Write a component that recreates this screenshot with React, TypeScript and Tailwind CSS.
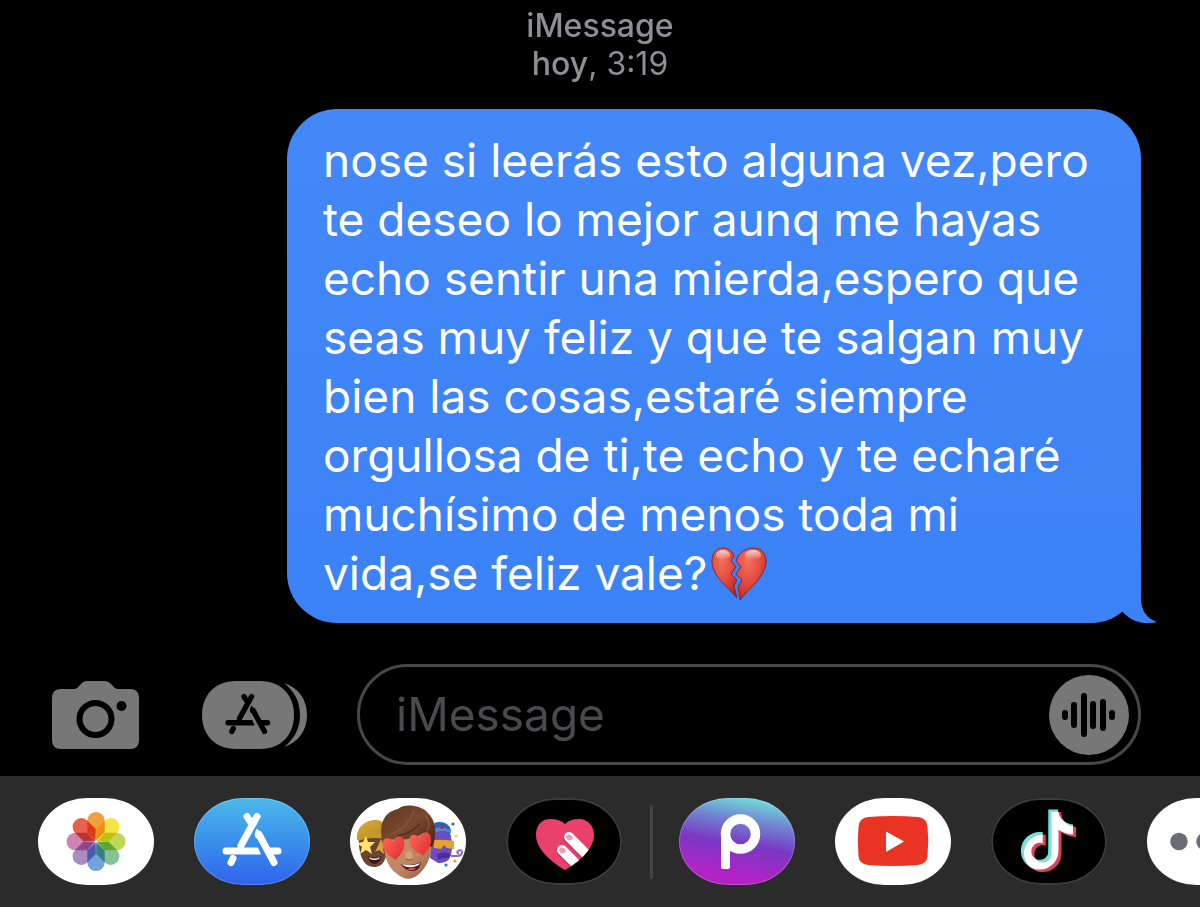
import React from "react";

const lines = [
  "nose si leerás esto alguna vez,pero",
  "te deseo lo mejor aunq me hayas",
  "echo sentir una mierda,espero que",
  "seas muy feliz y que te salgan muy",
  "bien las cosas,estaré siempre",
  "orgullosa de ti,te echo y te echaré",
  "muchísimo de menos toda mi",
];

const petals = ["#f2a03c", "#f7e442", "#c0d856", "#82c394", "#71a3dd", "#ab8bc4", "#cf84b4", "#e8604f"];

const waveBars = [
  { x: 16, top: 35, bottom: 45 },
  { x: 25, top: 27, bottom: 53 },
  { x: 35, top: 18, bottom: 62 },
  { x: 44, top: 26, bottom: 54 },
  { x: 54, top: 24, bottom: 56 },
  { x: 63, top: 35, bottom: 45 },
];

const loveHeart = "M0 12C-5 8-11 3-11-4C-11-12-3-13 0-6C3-13 11-12 11-4C11 3 5 8 0 12Z";

const tiktokNote =
  "M12.525.02c1.31-.02 2.61-.01 3.91-.02.08 1.53.63 3.09 1.75 4.17 1.12 1.11 2.7 1.62 4.24 1.79v4.03c-1.44-.05-2.89-.35-4.2-.97-.57-.26-1.1-.59-1.62-.93-.01 2.92.01 5.84-.02 8.75-.08 1.4-.54 2.79-1.35 3.94-1.31 1.92-3.58 3.17-5.91 3.21-1.43.08-2.86-.31-4.08-1.03-2.02-1.19-3.44-3.37-3.65-5.71-.02-.5-.03-1-.01-1.49.18-1.9 1.12-3.72 2.58-4.96 1.66-1.44 3.98-2.13 6.15-1.72.02 1.48-.04 2.96-.04 4.44-.99-.32-2.15-.23-3.02.37-.63.41-1.11 1.04-1.36 1.75-.21.51-.15 1.07-.14 1.61.24 1.64 1.82 3.02 3.5 2.87 1.12-.01 2.19-.66 2.77-1.61.19-.33.4-.67.41-1.06.1-1.79.06-3.57.07-5.36.01-4.03-.01-8.05.02-12.07z";

function BrokenHeart() {
  return (
    <svg viewBox="0 0 56 54" className="ml-1 inline-block h-[54px] w-[56px]" role="img" aria-label="corazón roto">
      <defs>
        <radialGradient id="heartRed" cx="0.4" cy="0.25" r="0.9">
          <stop offset="0" stopColor="#f4705f" />
          <stop offset="0.5" stopColor="#e2483a" />
          <stop offset="1" stopColor="#a81f1d" />
        </radialGradient>
        <linearGradient id="heartShine" x1="0" y1="0" x2="0" y2="1">
          <stop offset="0" stopColor="#fff" stopOpacity="0.75" />
          <stop offset="1" stopColor="#fff" stopOpacity="0" />
        </linearGradient>
      </defs>
      <path
        d="M23 8C20 3 16 1 12 1C5 1 1 7 1 14C1 29 15 38 26 51L23 39L26 33L20 27L25 20L20 14Z"
        fill="url(#heartRed)"
        stroke="#8e2326"
        strokeWidth="1"
        strokeLinejoin="round"
      />
      <path
        d="M27 9C31 4 37 1 43 1C51 1 56 8 55 16C53 31 39 40 29 53L27 40L31 33L25 27L30 20L25 14Z"
        fill="url(#heartRed)"
        stroke="#8e2326"
        strokeWidth="1"
        strokeLinejoin="round"
      />
      <ellipse cx="12" cy="8" rx="7" ry="5" fill="url(#heartShine)" />
      <ellipse cx="42" cy="8" rx="8" ry="5" fill="url(#heartShine)" />
    </svg>
  );
}

function StoreGlyph() {
  return (
    <g stroke="currentColor" strokeWidth="7" strokeLinecap="round" fill="currentColor">
      <path d="M35 4L19 33" />
      <path d="M25 4L30 12" />
      <path d="M11 46L9 50" />
      <path d="M37 22L52 50" />
      <path d="M35 16L41 23L34 26Q31 21 35 16Z" stroke="none" />
      <path d="M4 35H36L39 42H4A3.5 3.5 0 0 1 4 35Z" stroke="none" />
      <path d="M47 38.5H56" />
    </g>
  );
}

function CameraIcon() {
  return (
    <svg viewBox="0 0 87 68" className="h-[68px] w-[87px]">
      <path
        d="M9 8H21C25 8 26 6 29 3C31 1 32 0 36 0H52C55 0 57 1 59 3C62 6 63 8 67 8H78Q87 8 87 17V59Q87 68 78 68H9Q0 68 0 59V17Q0 8 9 8Z"
        fill="#777"
      />
      <circle cx="43.5" cy="38" r="16" fill="none" stroke="#000" strokeWidth="6" />
      <circle cx="69.5" cy="25" r="5" fill="#000" />
    </svg>
  );
}

function AppsIcon() {
  return (
    <svg viewBox="0 0 105 68" className="h-[68px] w-[105px]">
      <path d="M34 0H58C80 0 92 15 92 34S80 68 58 68H34C12 68 0 53 0 34S12 0 34 0Z" fill="#777" />
      <path d="M82 2C97 7 105 19 105 34S97 61 82 66C92 58 98 48 98 34S92 10 82 2Z" fill="#777" />
      <g transform="translate(23 12.5) scale(.76)" className="text-black">
        <StoreGlyph />
      </g>
    </svg>
  );
}

function Photos() {
  return (
    <svg viewBox="0 0 116 87" className="h-full w-full">
      <g transform="translate(58 43.5)" className="isolate">
        {petals.map((color, i) => (
          <path
            key={color}
            d="M0 -1L-8.7 -9V-20.8A8.7 8.7 0 0 1 8.7 -20.8V-9Z"
            fill={color}
            transform={`rotate(${i * 45})`}
            className="mix-blend-multiply"
          />
        ))}
      </g>
    </svg>
  );
}

function AppStore() {
  return (
    <svg viewBox="0 0 116 87" className="h-full w-full text-white">
      <g transform="translate(28 14.5)">
        <StoreGlyph />
      </g>
    </svg>
  );
}

function Memoji() {
  return (
    <svg viewBox="0 0 116 87" className="h-full w-full">
      <defs>
        <linearGradient id="skin" x1="0" y1="0" x2="1" y2="1">
          <stop offset="0" stopColor="#cf9672" />
          <stop offset="0.6" stopColor="#bd8460" />
          <stop offset="1" stopColor="#8e593d" />
        </linearGradient>
        <linearGradient id="hair" x1="0" y1="0" x2="1" y2="1">
          <stop offset="0" stopColor="#5c3522" />
          <stop offset="0.5" stopColor="#7a492e" />
          <stop offset="1" stopColor="#432417" />
        </linearGradient>
        <linearGradient id="loveEye" x1="0" y1="0" x2="1" y2="1">
          <stop offset="0" stopColor="#ff6658" />
          <stop offset="1" stopColor="#dc2a2c" />
        </linearGradient>
        <linearGradient id="cap" x1="0" y1="0" x2="1" y2="1">
          <stop offset="0" stopColor="#d9b03a" />
          <stop offset="1" stopColor="#b3851d" />
        </linearGradient>
      </defs>
      {/* star eyes */}
      <path d="M9 38C8 54 12 69 24 69C34 69 38 60 38 38Z" fill="#694431" />
      <path d="M7 42C6 29 15 22 26 22C32 22 36 26 36 32V40C26 38 16 39 7 42Z" fill="url(#cap)" />
      <path d="M8 38C17 34 27 34 36 36V41C26 39 16 40 8 43Z" fill="#c79a28" />
      <path d="M16 38L18 44L25 44L20 49L22 56L16 52L10 56L12 49L7 45L13 44Z" fill="#ffe36a" />
      <path d="M31 41L33 46L37 47L33 50L34 56L29 52L25 54L28 48Z" fill="#d6a639" />
      <path d="M18 58Q24 61 31 58Q30 66 24 66Q19 65 18 58Z" fill="#3b1715" />
      <path d="M19 59Q24 62 30 59L29 61Q24 63 20 61Z" fill="#f4eee8" />
      {/* party face */}
      <path d="M82 32H99Q104 45 101 57Q98 66 88 65L80 60Z" fill="#6c4cc4" />
      <path d="M81 34Q80 25 88 24Q98 23 101 32L100 36Q92 31 83 35Z" fill="#2c63b5" />
      <path d="M84 31Q91 27 100 32L101 35Q92 31 84 35Z" fill="#4c8ad6" />
      <circle cx="92" cy="29" r="2" fill="#b32b59" />
      <path d="M82 42Q93 41 104 43V51L97 50L94 47L91 51L84 50Z" fill="#e3a42c" />
      <path d="M87 56Q94 53 101 56L99 60Q93 59 88 62Z" fill="#4c2d9c" />
      <path d="M101 58H107Q112 58 112 54Q111 51 108 53Q106 55 109 56" fill="none" stroke="#8965cc" strokeWidth="2" />
      <circle cx="103" cy="26" r="1.6" fill="#3561c4" />
      <circle cx="106" cy="38" r="1.6" fill="#efd860" />
      <circle cx="105" cy="63" r="1.6" fill="#e29a35" />
      <circle cx="96" cy="67" r="1.6" fill="#3a67d0" />
      {/* heart eyes */}
      <path d="M34 36C33 57 37 68 46 75Q58 86 69 76C79 67 83 54 82 34Z" fill="url(#skin)" />
      <path d="M33 46C28 28 33 14 48 11C54 5 71 7 77 14C86 22 87 35 83 48L80 49L80 42L73 35C64 42 48 43 38 41L36 49L33 48Z" fill="url(#hair)" />
      <path d="M41 36Q57 31 64 13M77 33Q82 25 75 17" fill="none" stroke="#94603e" strokeWidth="1" />
      <path d="M47 38Q60 36 70 26" fill="none" stroke="#3f2316" strokeWidth="1" />
      <path d="M56 54Q54 60 58 62Q62 63 63 60Q62 55 61 53Z" fill="#d9a07a" />
      <path d="M56 61Q59 63 63 61" fill="none" stroke="#8c5338" strokeWidth="1" />
      <path d={loveHeart} transform="translate(44 50) rotate(-8)" fill="url(#loveEye)" />
      <path d={loveHeart} transform="translate(71 46) rotate(-12)" fill="url(#loveEye)" />
      <path d="M51 66Q61 69 71 64Q70 73 62 73Q55 73 51 66Z" fill="#5a1716" />
      <path d="M52 66Q61 69 70 65L69 67Q61 71 54 68Z" fill="#fff" />
      <path d="M57 71Q62 69 66 70Q63 74 57 71Z" fill="#c9565c" />
    </svg>
  );
}

function DigitalTouch() {
  return (
    <svg viewBox="0 0 116 87" className="h-full w-full">
      <defs>
        <clipPath id="touchHeart">
          <path d="M59 72C52 68 30 54 30 37C30 27 36 21 44 21Q54 21 59 26Q64 21 73 21C82 21 88 28 88 37C88 54 66 68 59 72Z" />
        </clipPath>
      </defs>
      <g clipPath="url(#touchHeart)">
        <rect width="116" height="87" fill="#e9416b" />
        <path d="M63 40L85 62M56 53L78 75" stroke="#bd2d54" strokeWidth="11" strokeLinecap="round" />
        <path d="M63 39L87 63M56 52L80 76" stroke="#fff" strokeWidth="10" strokeLinecap="round" />
        <path d="M60 38Q63 35 66 38Q68 41 65 42Q60 43 60 38ZM53 51Q56 48 59 51Q61 54 58 55Q53 56 53 51Z" fill="#f39ab5" />
      </g>
    </svg>
  );
}

function Picsart() {
  return (
    <svg viewBox="0 0 116 87" className="h-full w-full">
      <circle cx="61.5" cy="36" r="15" fill="none" stroke="#fff" strokeWidth="9.5" />
      <path d="M42 36H51V69Q51 71 49 71H44Q42 71 42 69Z" fill="#fff" />
    </svg>
  );
}

function YouTube() {
  return (
    <svg viewBox="0 0 116 87" className="h-full w-full">
      <path d="M33 19Q58 17 83 19Q92 20 92.5 29Q94 43 92.5 58Q92 66 83 67Q58 69 33 67Q24 66 23.5 58Q22 43 23.5 29Q24 20 33 19Z" fill="#e93323" />
      <path d="M51 33.5L69 43.5L51 54Z" fill="#fff" />
    </svg>
  );
}

function TikTok() {
  return (
    <svg viewBox="0 0 116 87" className="h-full w-full">
      <defs>
        <clipPath id="cyanNote">
          <path d={tiktokNote} transform="translate(26 11.5) scale(2.5)" />
        </clipPath>
      </defs>
      <path d={tiktokNote} transform="translate(26 11.5) scale(2.5)" fill="#6de5dc" />
      <path d={tiktokNote} transform="translate(29 14) scale(2.5)" fill="#e0405d" />
      <g clipPath="url(#cyanNote)">
        <path d={tiktokNote} transform="translate(29 14) scale(2.5)" fill="#fff" />
      </g>
    </svg>
  );
}

function More() {
  return (
    <svg viewBox="0 0 116 87" className="h-full w-full" fill="#6c6c76">
      <circle cx="32" cy="43.5" r="8.7" />
      <circle cx="58" cy="43.5" r="8.7" />
      <circle cx="84" cy="43.5" r="8.7" />
    </svg>
  );
}

const systemApps = [
  { name: "Fotos", icon: <Photos />, look: "bg-white" },
  { name: "App Store", icon: <AppStore />, look: "bg-linear-to-b from-[#4db9ea] to-[#3161ea] shadow-[inset_0_0_0_1px_#ffffff33]" },
  { name: "Memoji", icon: <Memoji />, look: "bg-white" },
  { name: "Digital Touch", icon: <DigitalTouch />, look: "bg-black shadow-[inset_0_0_0_2px_#3c3c3c]" },
];

const otherApps = [
  { name: "Picsart", icon: <Picsart />, look: "bg-[linear-gradient(190deg,#72e6dc_5%,#7188d0_28%,#7a38c4_52%,#b223c6_82%)] shadow-[inset_0_0_0_1px_#ffffff33]" },
  { name: "YouTube", icon: <YouTube />, look: "bg-white" },
  { name: "TikTok", icon: <TikTok />, look: "bg-black shadow-[inset_0_0_0_2px_#3c3c3c]" },
  { name: "Más", icon: <More />, look: "bg-white" },
];

function AppGroup({ apps }: { apps: typeof systemApps }) {
  return (
    <div className="flex shrink-0 gap-10">
      {apps.map((app) => (
        <button
          key={app.name}
          type="button"
          aria-label={app.name}
          className={`h-[87px] w-[116px] shrink-0 overflow-hidden [border-radius:50px/44px] ${app.look}`}
        >
          {app.icon}
        </button>
      ))}
    </div>
  );
}

export default function App() {
  return (
    <div className="flex min-h-screen flex-col overflow-hidden bg-black font-['Inter',sans-serif]">
      <main className="flex-1 pt-[7px]">
        <div className="text-center text-[32px] leading-[38px] text-[#8e8e93]">
          <p className="font-medium">iMessage</p>
          <p>
            <span className="font-medium">hoy</span>, 3:19
          </p>
        </div>

        <div className="relative mt-[26px] mr-[59px] ml-[287px] rounded-[50px] bg-linear-to-b from-[#4488f8] to-[#3b82f7] pt-[22px] pb-[20px] pl-[36px]">
          <p className="text-[46px] leading-[59px] whitespace-nowrap text-white">
            {lines.map((line) => (
              <span key={line} className="block">
                {line}
              </span>
            ))}
            <span className="flex items-center">
              vida,se feliz vale?
              <BrokenHeart />
            </span>
          </p>
          {/* bubble tail */}
          <svg viewBox="0 0 60 60" className="absolute -right-[19px] bottom-0 h-[60px] w-[60px]">
            <path d="M41 0V34C41 47 46 55 57 59C44 62 31 59 22 48L10 26L31 0Z" fill="#3b82f7" />
          </svg>
        </div>
      </main>

      <form className="flex items-center pt-[41px] pr-[59px] pb-[11px] pl-[52px]">
        <button type="button" aria-label="Cámara" className="shrink-0">
          <CameraIcon />
        </button>
        <button type="button" aria-label="Apps" className="ml-[63px] shrink-0">
          <AppsIcon />
        </button>
        <div className="ml-[50px] flex h-[101px] min-w-0 flex-1 items-center rounded-full border-3 border-[#48484a] pr-[9px] pl-[36px]">
          <input
            type="text"
            aria-label="iMessage"
            placeholder="iMessage"
            className="min-w-0 flex-1 bg-transparent text-[46px] leading-[59px] text-white outline-none placeholder:text-[#4a4a4c]"
          />
          <button type="button" aria-label="Grabar audio" className="h-[80px] w-[80px] shrink-0 rounded-full bg-[#777]">
            <svg viewBox="0 0 80 80" stroke="#000" strokeWidth="6" strokeLinecap="round">
              {waveBars.map((bar) => (
                <path key={bar.x} d={`M${bar.x} ${bar.top + 3}V${bar.bottom - 3}`} />
              ))}
            </svg>
          </button>
        </div>
      </form>

      <nav className="flex items-center overflow-hidden bg-[#2b2b2b] py-[22px] pl-[38px]">
        <AppGroup apps={systemApps} />
        <div className="mr-[26px] ml-[28px] h-[74px] w-[3px] shrink-0 rounded-full bg-[#444]" />
        <AppGroup apps={otherApps} />
      </nav>
    </div>
  );
}
